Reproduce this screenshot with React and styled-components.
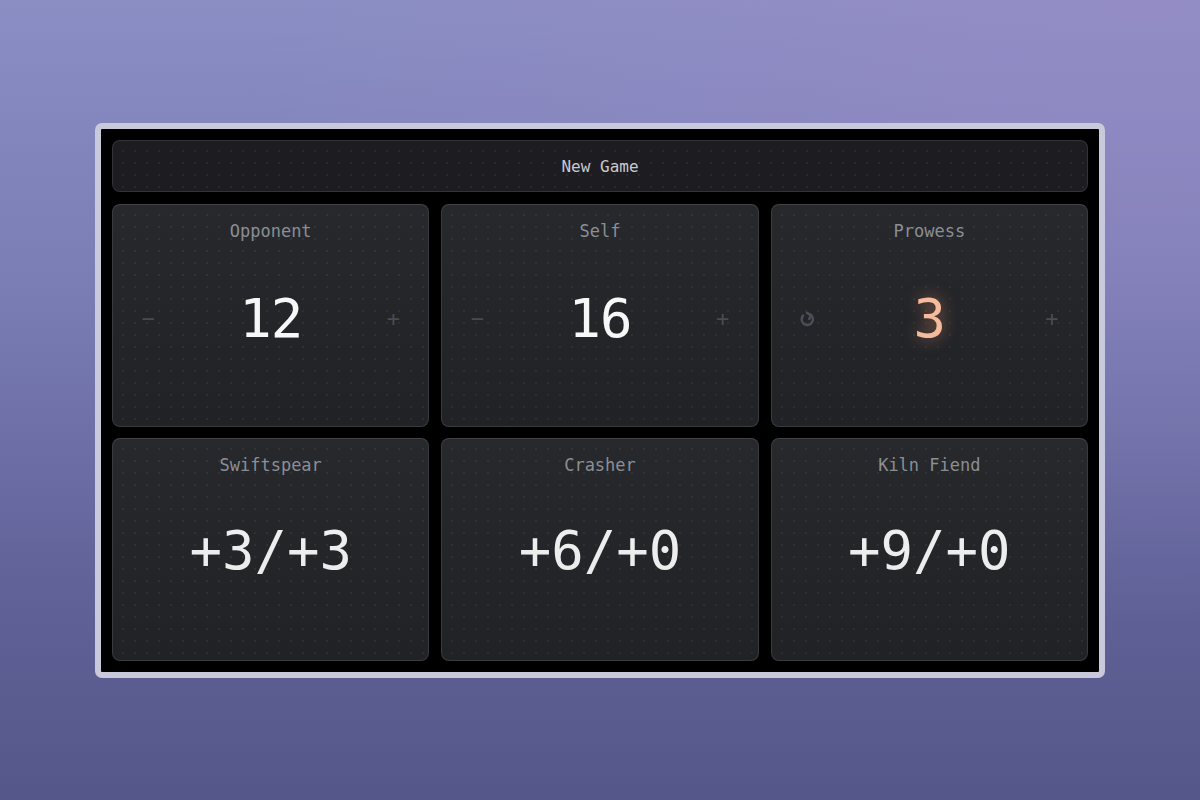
import React from "react";
import styled, {createGlobalStyle} from "styled-components";

const Global = createGlobalStyle`
  html, body {
    margin: 0;
    padding: 0;
    height: 100%;
  }
  body {
    font-family: "DejaVu Sans Mono", "Liberation Mono", monospace;
    background: #6c6ea4;
  }
`

const Page = styled.div`
  width: 1200px;
  height: 800px;
  display: flex;
  align-items: center;
  justify-content: center;
  background:
    radial-gradient(ellipse at 95% 0%, rgba(160, 140, 200, 0.45), transparent 55%),
    linear-gradient(180deg, #8a8ec3 0%, #7b7db5 35%, #62649a 70%, #555689 100%);
`

const Frame = styled.div`
  width: 1010px;
  padding: 11px;
  box-sizing: border-box;
  background: #000;
  border: 6px solid #c9c9dc;
  border-radius: 7px;
  display: flex;
  flex-direction: column;
  gap: 12px;
`

const dots = `
  background-image: radial-gradient(rgba(255, 255, 255, 0.055) 0.8px, transparent 1.2px);
  background-size: 12px 12px;
  background-position: 4px 4px;
`

const NewGame = styled.button`
  height: 52px;
  width: 100%;
  border: 1px solid rgba(255, 255, 255, 0.1);
  border-radius: 8px;
  background-color: #1d1c21;
  ${dots};
  color: #c9c9cf;
  font-family: inherit;
  font-size: 16px;
  padding-top: 2px;
  cursor: pointer;
`

const Grid = styled.div`
  display: grid;
  grid-template-columns: repeat(3, 1fr);
  grid-auto-rows: 223px;
  gap: 11px 12px;
`

const Card = styled.div`
  position: relative;
  border: 1px solid rgba(255, 255, 255, 0.1);
  border-top-color: rgba(255, 255, 255, 0.14);
  border-radius: 8px;
  background-color: #232529;
  ${dots};
  display: flex;
  flex-direction: column;
  align-items: center;
  overflow: hidden;
  &::before {
    content: "";
    position: absolute;
    inset: 0;
    background: linear-gradient(180deg, rgba(255, 255, 255, 0.015), rgba(0, 0, 0, 0.08));
    pointer-events: none;
  }
`

const Label = styled.div`
  margin-top: 15px;
  font-size: 17px;
  line-height: 22px;
  color: #8b8e94;
`

const Body = styled.div`
  flex: 1;
  width: 100%;
  display: flex;
  align-items: center;
  justify-content: space-between;
  padding: 0 24px 30px;
  box-sizing: border-box;
`

const Side = styled.span`
  width: 22px;
  text-align: center;
  font-size: 22px;
  color: #4a4d53;
  display: flex;
  justify-content: center;
  align-items: center;
`

const Value = styled.div`
  position: relative;
  font-size: 54px;
  line-height: 1;
  color: ${p => p.$accent ? "#f5bb9c" : "#f7f7f8"};
  text-shadow: ${p => p.$accent ? "0 0 16px rgba(245, 150, 110, 0.6)" : "none"};
  letter-spacing: -1px;
  &::before {
    content: "";
    display: ${p => p.$accent ? "block" : "none"};
    position: absolute;
    left: 50%;
    top: 50%;
    width: 130px;
    height: 130px;
    transform: translate(-50%, -50%);
    background: radial-gradient(circle, rgba(245, 170, 130, 0.1), transparent 65%);
    z-index: -1;
  }
`

const Stat = styled.div`
  flex: 1;
  display: flex;
  align-items: center;
  justify-content: center;
  padding-bottom: 34px;
  font-size: 54px;
  line-height: 1;
  color: #f7f7f8;
`

function Reset() {
    return (
        <svg width="18" height="18" viewBox="0 0 16 16" fill="none" stroke="#4d5056" strokeWidth="2.2" strokeLinecap="round" strokeLinejoin="round">
            <path d="M4.5 5 A5 5 0 1 0 11.5 4.5"/>
            <path d="M8 2.5 L11.5 4.5 L10 8"/>
        </svg>
    );
}

function Counter({label, value, left, accent}) {
    return (
        <Card>
            <Label>{label}</Label>
            <Body>
                <Side>{left}</Side>
                <Value $accent={accent}>{value}</Value>
                <Side>+</Side>
            </Body>
        </Card>
    );
}

function Creature({name, stat}) {
    return (
        <Card>
            <Label>{name}</Label>
            <Stat>{stat}</Stat>
        </Card>
    );
}

export default function App() {
    return (
        <Page>
            <Global/>
            <Frame>
                <NewGame>New Game</NewGame>
                <Grid>
                    <Counter label="Opponent" value="12" left="−"/>
                    <Counter label="Self" value="16" left="−"/>
                    <Counter label="Prowess" value="3" left={<Reset/>} accent/>
                    <Creature name="Swiftspear" stat="+3/+3"/>
                    <Creature name="Crasher" stat="+6/+0"/>
                    <Creature name="Kiln Fiend" stat="+9/+0"/>
                </Grid>
            </Frame>
        </Page>
    );
}
